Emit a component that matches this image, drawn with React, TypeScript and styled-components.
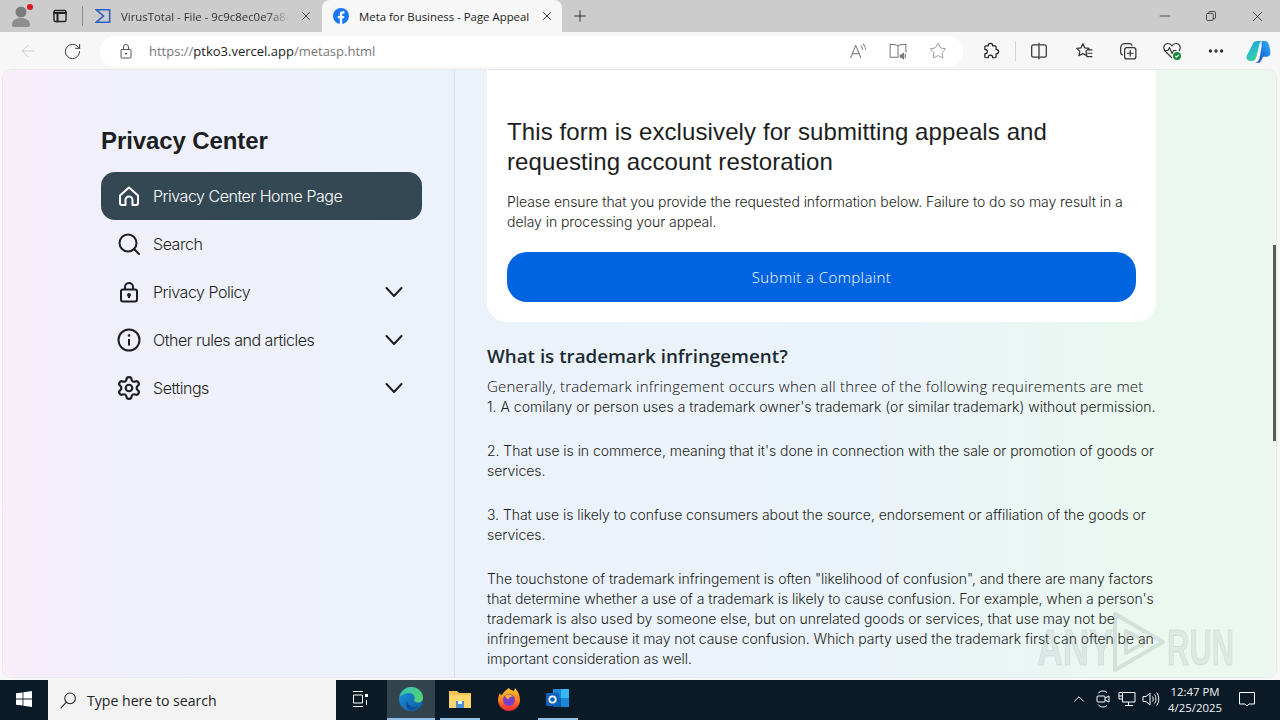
import styled, { createGlobalStyle } from "styled-components";
import { ArrowLeft, ChevronUp, Plus, RotateCw, Settings, Star, X } from "lucide-react";
import type { ReactNode } from "react";

const GlobalStyle = createGlobalStyle`
  html, body {
    margin: 0;
    padding: 0;
    width: 1280px;
    height: 720px;
    overflow: hidden;
    background: #f7f7f7;
  }
  * {
    box-sizing: border-box;
  }
`;

const CHROME_FONT = `"Open Sans", "Noto Sans", "Liberation Sans", sans-serif`;
const BODY_FONT = `Inter, "Liberation Sans", sans-serif`;

const Screen = styled.div`
  width: 1280px;
  height: 720px;
  display: flex;
  flex-direction: column;
  overflow: hidden;
  font-family: ${CHROME_FONT};
`;

/* tab strip */
const TabStrip = styled.div`
  height: 32px;
  flex: none;
  display: flex;
  align-items: center;
  background: #cccccc;
  color: #222;
`;

const StripSlot = styled.div<{ $w: number; $pr?: number }>`
  width: ${(p) => p.$w}px;
  padding-right: ${(p) => p.$pr ?? 0}px;
  height: 32px;
  flex: none;
  display: flex;
  align-items: center;
  justify-content: center;
  position: relative;
`;

const RedDot = styled.span`
  position: absolute;
  top: 4px;
  left: 27px;
  width: 6px;
  height: 6px;
  border-radius: 50%;
  background: #e0141c;
`;

const StripDivider = styled.div`
  width: 1px;
  height: 20px;
  flex: none;
  background: #8f8f8f;
`;

const Tab = styled.div<{ $active?: boolean }>`
  height: 32px;
  width: ${(p) => (p.$active ? 240 : 237)}px;
  margin-left: 1px;
  padding: 0 8px 0 11px;
  flex: none;
  display: flex;
  align-items: center;
  gap: 10px;
  font-size: 11.4px;
  border-radius: 8px 8px 0 0;
  color: ${(p) => (p.$active ? "#1a1a1a" : "#333")};
  background: ${(p) => (p.$active ? "#f7f7f7" : "transparent")};
`;

const TabTitle = styled.span<{ $fade?: boolean }>`
  flex: 1;
  white-space: nowrap;
  overflow: hidden;
  mask-image: ${(p) => (p.$fade ? "linear-gradient(90deg, #000 88%, transparent 100%)" : "none")};
`;

const WindowControls = styled.div`
  margin-left: auto;
  display: flex;
`;

const WindowButton = styled.div`
  width: 46px;
  height: 32px;
  display: flex;
  align-items: center;
  justify-content: center;
`;

/* address toolbar */
const Toolbar = styled.div`
  height: 38px;
  flex: none;
  display: flex;
  align-items: center;
  padding-left: 6px;
  background: #f7f7f7;
`;

const ToolSlot = styled.div<{ $w?: number; $ml?: number }>`
  width: ${(p) => p.$w ?? 44}px;
  margin-left: ${(p) => p.$ml ?? 0}px;
  height: 32px;
  flex: none;
  display: flex;
  align-items: center;
  justify-content: center;
  color: #333;
`;

const AddressBar = styled.div`
  width: 863px;
  height: 31px;
  margin-left: 6px;
  padding-left: 18px;
  flex: none;
  display: flex;
  align-items: center;
  background: #ffffff;
  border-radius: 16px;
`;

const Url = styled.div`
  margin-left: 15px;
  flex: 1;
  font-size: 13px;
  color: #777;
  white-space: nowrap;
  b {
    font-weight: 400;
    color: #1d1d1d;
  }
`;

const ToolDivider = styled.div`
  width: 1px;
  height: 20px;
  margin: 0 1px 0 2px;
  flex: none;
  background: #d4d4d4;
`;

/* web page */
const Page = styled.div`
  height: 607px;
  flex: none;
  margin: 0 4px 3px 3px;
  display: flex;
  position: relative;
  overflow: hidden;
  border-radius: 8px;
  box-shadow: 0 0 0 1px #e9e9e9;
  background: linear-gradient(90deg, #f9eefa 0%, #f0f0fb 9%, #ecf2fb 35%, #ebf3fa 68%, #ebf8f0 90%, #ebf8ef 100%);
  color: #1c1e21;
`;

const Sidebar = styled.aside`
  width: 452px;
  flex: none;
  padding: 56px 32px 0 98px;
  border-right: 1px solid #dde2ea;
`;

const SidebarTitle = styled.h1`
  margin: 0 0 16px;
  font: 700 24px/30px "Liberation Sans", Arial, sans-serif;
  letter-spacing: -0.1px;
  color: #1c1e21;
`;

const NavItem = styled.div<{ $active?: boolean }>`
  height: 48px;
  padding: 0 16px;
  display: flex;
  align-items: center;
  gap: 12px;
  border-radius: 14px;
  font: 300 16px/20px ${BODY_FONT};
  letter-spacing: -0.47px;
  color: ${(p) => (p.$active ? "#ffffff" : "#1c1e21")};
  background: ${(p) => (p.$active ? "#344854" : "transparent")};
`;

const NavLabel = styled.span`
  flex: 1;
`;

const Main = styled.main`
  width: 669px;
  margin-left: 32px;
  flex: none;
`;

const Card = styled.section`
  padding: 47px 20px 20px;
  background: #ffffff;
  border-radius: 0 0 20px 20px;
`;

const CardTitle = styled.h2`
  margin: 0 0 15px;
  font: 400 24px/30px "Liberation Sans", Arial, sans-serif;
  letter-spacing: 0.1px;
  color: #1c1e21;
`;

const CardText = styled.p`
  margin: 0 0 20px;
  font: 300 14px/20px ${BODY_FONT};
  letter-spacing: -0.05px;
`;

const SubmitButton = styled.button`
  width: 100%;
  height: 50px;
  display: block;
  border: 0;
  border-radius: 20px;
  background: #0064e0;
  color: #ffffff;
  font: 300 15px/20px "Open Sans", sans-serif;
  letter-spacing: 0.4px;
`;

const SectionTitle = styled.h3`
  margin: 22px 0 9px;
  font: 600 18.8px/24px "Open Sans", sans-serif;
  color: #1c2b33;
`;

const Para = styled.p`
  margin: 0 0 24px;
  white-space: nowrap;
  font: 300 14px/20px ${BODY_FONT};
  letter-spacing: -0.05px;
`;

const WideLine = styled.span`
  display: block;
  margin: -1px 0 1px;
  font: 300 15px/20px "Open Sans", sans-serif;
  letter-spacing: 0.2px;
  color: #0c0d0f;
`;

const LooseLine = styled.span`
  display: block;
  letter-spacing: 0.01px;
`;

const ScrollThumb = styled.div`
  position: absolute;
  top: 175px;
  right: 0;
  width: 3px;
  height: 196px;
  background: #595959;
`;

const Watermark = styled.div`
  position: absolute;
  left: 1034px;
  top: 541px;
  height: 62px;
  display: flex;
  align-items: flex-end;
  pointer-events: none;
`;

const WatermarkWord = styled.span<{ $w: number; $sx: number }>`
  width: ${(p) => p.$w}px;
  display: block;
  transform: scaleX(${(p) => p.$sx});
  transform-origin: left bottom;
  font: 700 50px/50px "Liberation Sans", sans-serif;
  color: rgba(120, 130, 130, 0.12);
  -webkit-text-stroke: 1px rgba(120, 130, 130, 0.16);
  white-space: nowrap;
`;

/* taskbar */
const Taskbar = styled.div`
  height: 40px;
  flex: none;
  display: flex;
  align-items: stretch;
  background: #0a1a26;
  color: #fff;
`;

const TaskSlot = styled.div<{ $w: number; $active?: boolean; $mark?: boolean; $pr?: number }>`
  width: ${(p) => p.$w}px;
  padding-right: ${(p) => p.$pr ?? 0}px;
  flex: none;
  display: flex;
  align-items: center;
  justify-content: center;
  position: relative;
  background: ${(p) => (p.$active ? "#33444f" : "transparent")};
  border-bottom: 2px solid ${(p) => (p.$mark ? "#8fc1e8" : "transparent")};
`;

const SearchBox = styled.div`
  width: 288px;
  flex: none;
  display: flex;
  align-items: center;
  gap: 10px;
  padding-left: 12px;
  background: #f3f3f3;
  color: #222;
  font-size: 14.1px;
`;

const Tray = styled.div`
  margin-left: auto;
  padding-right: 13px;
  display: flex;
  align-items: stretch;
`;

const Clock = styled.div`
  width: 64px;
  flex: none;
  display: flex;
  flex-direction: column;
  align-items: center;
  justify-content: center;
  font-size: 11.4px;
  line-height: 16px;
  color: #eef2f4;
`;

const Icon = ({ size = 16, children, sw = 1, color = "currentColor" }: { size?: number; children: ReactNode; sw?: number; color?: string }) => (
  <svg width={size} height={size} viewBox="0 0 16 16" fill="none" stroke={color} strokeWidth={sw} strokeLinecap="round" strokeLinejoin="round">
    {children}
  </svg>
);

const NavChevron = () => (
  <svg width="24" height="24" viewBox="0 0 24 24" fill="none" stroke="#1c1e21" strokeWidth="2" strokeLinecap="round" strokeLinejoin="round">
    <path d="M4.500 8l7.500 8 7.500-8" />
  </svg>
);

const Avatar = () => (
  <svg width="22" height="24" viewBox="0 0 22 24">
    <circle cx="10" cy="8" r="5.500" fill="#7d7d7d" />
    <path d="M1 21c0-5 4-7 9-7s9 2 9 7c0 1-1 2-2 2H3c-1 0-2-1-2-2z" fill="#8e8e8e" />
  </svg>
);

const VirusTotalMark = () => (
  <svg width="16" height="16" viewBox="0 0 18 18" fill="none" stroke="#2f5fc4" strokeWidth="1.800">
    <path d="M1.500 2h15v14h-15L9.500 9z" />
  </svg>
);

const FacebookMark = () => (
  <svg width="16" height="16" viewBox="0 0 16 16">
    <circle cx="8" cy="8" r="8" fill="#1877f2" />
    <path d="M11 10.200l.4-2.200H9.200V6.600c0-.7.3-1.200 1.300-1.200h1V3.500s-.9-.2-1.800-.2C7.900 3.300 6.800 4.400 6.800 6.300V8h-2v2.200h2V16h2.400v-5.800z" fill="#fff" />
  </svg>
);

const CopilotMark = () => (
  <svg width="25" height="25" viewBox="0 0 24 24">
    <defs>
      <linearGradient id="cpA" x1="0" y1="0" x2="0.600" y2="1">
        <stop offset="0" stopColor="#1d8fe0" />
        <stop offset="0.600" stopColor="#2ac3c6" />
        <stop offset="1" stopColor="#43d08e" />
      </linearGradient>
      <linearGradient id="cpB" x1="1" y1="0" x2="0" y2="1">
        <stop offset="0" stopColor="#2bb4ec" />
        <stop offset="0.600" stopColor="#1f6fe0" />
        <stop offset="1" stopColor="#2a3fc0" />
      </linearGradient>
    </defs>
    <path d="M15 2h3c2.500 0 3.500 1.500 4.300 4.500l1 5c.6 3.500-1 5.500-3.500 5.500h-3.300l-2.500 4.500C13 23 11.500 23 9 23c3-1 3.500-3 4.300-6L15 7z" fill="url(#cpB)" />
    <path d="M6 6c.8-2.700 2.500-4 5-4h5c-2 0-2.700 1.700-3.300 4L10 17c-.7 2.700-2 4-4.500 4H4c-2.500 0-4-2-3.300-5z" fill="url(#cpA)" />
  </svg>
);

const EdgeMark = () => (
  <svg width="26" height="26" viewBox="0 0 26 26">
    <defs>
      <linearGradient id="edA" x1="0" y1="0" x2="1" y2="1">
        <stop offset="0" stopColor="#35c1b0" />
        <stop offset="1" stopColor="#5ad36a" />
      </linearGradient>
      <linearGradient id="edB" x1="0" y1="0" x2="1" y2="1">
        <stop offset="0" stopColor="#1c8fd8" />
        <stop offset="1" stopColor="#0c5ea8" />
      </linearGradient>
    </defs>
    <circle cx="13" cy="13" r="12" fill="url(#edB)" />
    <path d="M1.500 11C3 5 8 1 13 1c7 0 12 5 12 10.500 0 3-2 5-5 5-2 0-4-1-4-2.500 2-2 0-7-5-7-4 0-7 2-9.500 4z" fill="url(#edA)" />
    <path d="M9 14c0 4 3 7 7 7 2 0 3-.5 4-1-2 3-5 4-7 4-4 0-6-5-4-10z" fill="#0a4f96" />
  </svg>
);

const FolderMark = () => (
  <svg width="24" height="22" viewBox="0 0 24 22">
    <path d="M1 3h8l2 2h12v15H1z" fill="#f2c14e" />
    <rect x="1" y="7" width="22" height="13" fill="#fbd76b" />
    <rect x="8" y="13" width="8" height="7" fill="#4a90d6" />
    <rect x="10" y="13" width="4" height="3" fill="#e8f0f8" />
  </svg>
);

const FirefoxMark = () => (
  <svg width="24" height="26" viewBox="0 0 24 26">
    <defs>
      <linearGradient id="ffA" x1="0" y1="0" x2="0" y2="1">
        <stop offset="0" stopColor="#ffc72b" />
        <stop offset="0.550" stopColor="#ff7a1f" />
        <stop offset="1" stopColor="#f0243c" />
      </linearGradient>
    </defs>
    <path d="M12 2c1 2 3 2 5 3l1-3c3 3 5 7 5 12 0 6-5 11-11 11S1 20 1 14c0-3 1-5 2-7 0 1 1 2 2 2 1-3 4-5 7-7z" fill="url(#ffA)" />
    <circle cx="12" cy="14" r="6" fill="#7b3fc8" />
    <path d="M8 10c2-2 6-2 8 1-2-1-4 0-4 2-2 0-3-1-4-3z" fill="#ffb02e" />
  </svg>
);

const OutlookMark = () => (
  <svg width="26" height="24" viewBox="0 0 26 24">
    <rect x="8" y="2" width="16" height="18" fill="#1a86d8" />
    <rect x="16" y="2" width="8" height="9" fill="#35b8f1" />
    <rect x="8" y="11" width="8" height="9" fill="#0f5fa8" />
    <rect x="1" y="6" width="13" height="13" rx="1" fill="#0b62c0" />
    <circle cx="7.500" cy="12.500" r="3.200" fill="none" stroke="#fff" strokeWidth="1.700" />
  </svg>
);

export default function App() {
  return (
    <Screen>
      <GlobalStyle />
      <TabStrip>
        <StripSlot $w={44}>
          <Avatar />
          <RedDot />
        </StripSlot>
        <StripSlot $w={38} $pr={6}>
          <Icon size={16} sw={1.400}>
            <rect x="2" y="2.500" width="12" height="11" rx="1.500" />
            <path d="M2 5h12M5.500 5v8.500" strokeWidth="2" />
          </Icon>
        </StripSlot>
        <StripDivider />
        <Tab>
          <VirusTotalMark />
          <TabTitle $fade>VirusTotal - File - 9c9c8ec0e7a8e7</TabTitle>
          <X size={14} strokeWidth={1.500} />
        </Tab>
        <Tab $active>
          <FacebookMark />
          <TabTitle>Meta for Business - Page Appeal</TabTitle>
          <X size={14} strokeWidth={1.500} />
        </Tab>
        <StripSlot $w={36}>
          <Plus size={18} strokeWidth={1.200} />
        </StripSlot>
        <WindowControls>
          <WindowButton>
            <Icon size={12}><path d="M1.500 8h13" /></Icon>
          </WindowButton>
          <WindowButton>
            <Icon size={12}>
              <rect x="2" y="4.500" width="9" height="9.500" rx="1.500" />
              <path d="M5 4V3.500A1.500 1.500 0 0 1 6.500 2h6A1.500 1.500 0 0 1 14 3.500V10a1.500 1.500 0 0 1-1.500 1.500H11" />
            </Icon>
          </WindowButton>
          <WindowButton>
            <X size={17} strokeWidth={1.100} />
          </WindowButton>
        </WindowControls>
      </TabStrip>

      <Toolbar>
        <ToolSlot>
          <ArrowLeft size={20} strokeWidth={1} color="#c4c4c4" />
        </ToolSlot>
        <ToolSlot>
          <RotateCw size={19} strokeWidth={1.200} />
        </ToolSlot>
        <AddressBar>
          <Icon size={16} color="#555">
            <rect x="3" y="6.500" width="10" height="8.500" rx="1" />
            <path d="M5.500 6.500V4a2.500 2.500 0 0 1 5 0v2.500" />
            <circle cx="8" cy="10.700" r=".6" fill="#555" />
          </Icon>
          <Url>https://<b>ptko3.vercel.app</b>/metasp.html</Url>
          <ToolSlot $w={40}>
            <Icon size={18} color="#777" sw={0.900}>
              <path d="M1.500 14L6 3l4.500 11M3 10.500h6" />
              <path d="M10.500 3.500c1 .8 1.500 1.800 1.500 3M12.500 1.800c1.500 1.200 2.200 2.800 2.200 4.700" />
            </Icon>
          </ToolSlot>
          <ToolSlot $w={40}>
            <Icon size={18} color="#777" sw={0.900}>
              <path d="M8 3.500C7 2.500 4 2 1 2v11.500h7M8 3.500C9 2.500 12 2 15 2v7M8 3.500v10" />
              <path d="M10 11.500h1.200l1.800-1.500v5l-1.800-1.500H10zM14.500 11v3" fill="#777" />
            </Icon>
          </ToolSlot>
          <ToolSlot $w={40}>
            <Star size={18} strokeWidth={1} color="#777" />
          </ToolSlot>
          <ToolSlot $w={5} />
        </AddressBar>
        <ToolSlot $ml={6}>
          <Icon size={18} sw={1.100} color="#222">
            <path d="M5.500 3.500c0-3 4-3 4 0h2a1 1 0 0 1 1 1v2c3 0 3 4 0 4v2.500a1 1 0 0 1-1 1H9.500c0-3-4-3-4 0h-2a1 1 0 0 1-1-1v-2.500c3 0 3-4 0-4v-2a1 1 0 0 1 1-1z" />
          </Icon>
        </ToolSlot>
        <ToolDivider />
        <ToolSlot>
          <Icon size={18} sw={1.100}>
            <path d="M7 2.500H3A1.500 1.500 0 0 0 1.500 4v8A1.500 1.500 0 0 0 3 13.500h4M9 2.500h4A1.500 1.500 0 0 1 14.500 4v8a1.500 1.500 0 0 1-1.500 1.500H9M8 1v14" />
          </Icon>
        </ToolSlot>
        <ToolSlot $ml={1}>
          <Icon size={18} sw={1.100}>
            <path d="M7 1.500l1.700 3.800 3.800.4-2.800 2.600.8 3.900L7 10.300l-3.500 1.900.8-3.900L1.500 5.700l3.800-.4zM12 7h3M11.500 10h3.500M10.500 13h4.500" />
          </Icon>
        </ToolSlot>
        <ToolSlot>
          <Icon size={18} sw={1.100}>
            <rect x="5" y="5" width="10" height="10" rx="2" />
            <path d="M10 7.500v5M7.500 10h5M3 11.500A2 2 0 0 1 1.500 9.500V5A3.500 3.500 0 0 1 5 1.500h4.500A2 2 0 0 1 11.500 3" />
          </Icon>
        </ToolSlot>
        <ToolSlot>
          <svg width="20" height="20" viewBox="0 0 20 20" fill="none" stroke="#333" strokeWidth="1.100" strokeLinejoin="round">
            <path d="M10 17L3 10C0 6 3 2 6.500 2.500 8 2.700 9.500 4 10 5c.5-1 2-2.300 3.500-2.500C17 2 20 6 17 10M2 9.500h4l1.500-3 2.500 6 1.500-3h3" />
            <circle cx="15" cy="15" r="4" fill="#1a8a3c" stroke="none" />
            <path d="M13.300 15l1.200 1.200 2.200-2.300" stroke="#fff" />
          </svg>
        </ToolSlot>
        <ToolSlot>
          <Icon size={18}>
            <circle cx="3" cy="8" r="1" fill="#222" />
            <circle cx="8" cy="8" r="1" fill="#222" />
            <circle cx="13" cy="8" r="1" fill="#222" />
          </Icon>
        </ToolSlot>
        <ToolSlot $w={40}>
          <CopilotMark />
        </ToolSlot>
      </Toolbar>

      <Page>
        <Sidebar>
          <SidebarTitle>Privacy Center</SidebarTitle>
          <NavItem $active>
            <svg width="24" height="24" viewBox="0 0 24 24" fill="none" stroke="#fff" strokeWidth="2" strokeLinejoin="round">
              <path d="M3 11.500L12 3.500l9 8V19a2 2 0 0 1-2 2h-3.500v-5a3.500 3.500 0 0 0-7 0v5H5a2 2 0 0 1-2-2z" />
            </svg>
            <NavLabel>Privacy Center Home Page</NavLabel>
          </NavItem>
          <NavItem>
            <svg width="24" height="24" viewBox="0 0 24 24" fill="none" stroke="#1c1e21" strokeWidth="2" strokeLinecap="round">
              <circle cx="11" cy="11" r="8.500" />
              <path d="M17.500 17.500L22 22" />
            </svg>
            <NavLabel>Search</NavLabel>
          </NavItem>
          <NavItem>
            <svg width="24" height="24" viewBox="0 0 24 24" fill="none" stroke="#1c1e21" strokeWidth="2">
              <rect x="4" y="9.500" width="16" height="12" rx="2" />
              <path d="M8 9.500V7a4 4 0 0 1 8 0v2.500" />
              <circle cx="12" cy="15" r="2" fill="#1c1e21" stroke="none" />
              <path d="M12 15v3" />
            </svg>
            <NavLabel>Privacy Policy</NavLabel>
            <NavChevron />
          </NavItem>
          <NavItem>
            <svg width="24" height="24" viewBox="0 0 24 24" fill="none" stroke="#1c1e21" strokeWidth="2">
              <circle cx="12" cy="12" r="10.500" />
              <path d="M12 11v6.500" />
              <circle cx="12" cy="7.500" r="1.300" fill="#1c1e21" stroke="none" />
            </svg>
            <NavLabel>Other rules and articles</NavLabel>
            <NavChevron />
          </NavItem>
          <NavItem>
            <Settings size={24} strokeWidth={2} viewBox="1 1 22 22" />
            <NavLabel>Settings</NavLabel>
            <NavChevron />
          </NavItem>
        </Sidebar>

        <Main>
          <Card>
            <CardTitle>This form is exclusively for submitting appeals and requesting account restoration</CardTitle>
            <CardText>
              Please ensure that you provide the requested information below. Failure to do so may result in a delay in processing your appeal.
            </CardText>
            <SubmitButton>Submit a Complaint</SubmitButton>
          </Card>
          <SectionTitle>What is trademark infringement?</SectionTitle>
          <Para>
            <WideLine>Generally, trademark infringement occurs when all three of the following requirements are met</WideLine>
            <LooseLine>1. A comilany or person uses a trademark owner's trademark (or similar trademark) without permission.</LooseLine>
          </Para>
          <Para>
            2. That use is in commerce, meaning that it's done in connection with the sale or promotion of goods or
            <br />
            services.
          </Para>
          <Para>
            3. That use is likely to confuse consumers about the source, endorsement or affiliation of the goods or
            <br />
            services.
          </Para>
          <Para>
            The touchstone of trademark infringement is often "likelihood of confusion", and there are many factors
            <br />
            that determine whether a use of a trademark is likely to cause confusion. For example, when a person's
            <br />
            trademark is also used by someone else, but on unrelated goods or services, that use may not be
            <br />
            infringement because it may not cause confusion. Which party used the trademark first can often be an
            <br />
            important consideration as well.
          </Para>
        </Main>
        <ScrollThumb />
        <Watermark>
          <WatermarkWord $w={74} $sx={0.72}>ANY</WatermarkWord>
          <svg width="56" height="62" viewBox="0 0 56 62" fill="none" stroke="rgba(120,130,130,0.2)" strokeWidth="4" strokeLinejoin="round">
            <path d="M4 3l48 28L4 59z" />
            <path d="M15 20l20 11-20 11z" />
          </svg>
          <WatermarkWord $w={66} $sx={0.62}>RUN</WatermarkWord>
        </Watermark>
      </Page>

      <Taskbar>
        <TaskSlot $w={48}>
          <svg width="16" height="16" viewBox="0 0 16 16" fill="#fff">
            <path d="M0 2.300L6.600 1.400V7.600H0zM7.400 1.300L16 0V7.600H7.400zM0 8.400H6.600V14.600L0 13.700zM7.400 8.400H16V16L7.400 14.700z" />
          </svg>
        </TaskSlot>
        <SearchBox>
          <Icon size={17} color="#222">
            <circle cx="9.500" cy="6" r="5" />
            <path d="M6 9.500L1 15" />
          </Icon>
          Type here to search
        </SearchBox>
        <TaskSlot $w={51} $pr={3}>
          <svg width="17" height="16" viewBox="0 0 17 16" fill="none" stroke="#fff">
            <path d="M1 .5h10M1 15.500h10M1.500 4h9v8h-9z" />
            <rect x="13" y="3" width="3" height="3" fill="#fff" stroke="none" />
            <path d="M14.500 9v5" />
          </svg>
        </TaskSlot>
        <TaskSlot $w={48} $active $mark>
          <EdgeMark />
        </TaskSlot>
        <TaskSlot $w={5} />
        <TaskSlot $w={40} $mark>
          <FolderMark />
        </TaskSlot>
        <TaskSlot $w={58}>
          <FirefoxMark />
        </TaskSlot>
        <TaskSlot $w={40} $mark>
          <OutlookMark />
        </TaskSlot>
        <Tray>
          <TaskSlot $w={24}>
            <ChevronUp size={18} strokeWidth={1.300} />
          </TaskSlot>
          <TaskSlot $w={24}>
            <svg width="16" height="18" viewBox="0 0 16 18" fill="none" stroke="#fff">
              <path d="M3 3.500C4 2 6 1 8 1s3 .8 4 1.500M3 14.500C4 16 6 17 8 17s3-.8 4-1.500" />
              <rect x="2" y="6" width="8" height="6" rx="1" />
              <path d="M10 8l4-2v6l-4-2" />
            </svg>
          </TaskSlot>
          <TaskSlot $w={24}>
            <svg width="18" height="16" viewBox="0 0 18 16" fill="none" stroke="#fff">
              <path d="M1 1.500h3M4.500 1.500H17V11H4.500zM1 1.500V8h3.500M7 14.500h8M10.500 11v3.500M1 5h3" />
            </svg>
          </TaskSlot>
          <TaskSlot $w={24}>
            <svg width="18" height="16" viewBox="0 0 18 16" fill="none" stroke="#fff">
              <path d="M1 5.500h3L8 2v12l-4-3.500H1zM10.500 5.500c1 1.500 1 3.500 0 5M12.500 3.500c2 2.500 2 6.500 0 9M14.500 1.500c3 3.500 3 9.500 0 13" />
            </svg>
          </TaskSlot>
          <Clock>
            <span>12:47 PM</span>
            <span>4/25/2025</span>
          </Clock>
          <TaskSlot $w={40}>
            <svg width="18" height="18" viewBox="0 0 18 18" fill="none" stroke="#fff">
              <path d="M1.500 2.500h15V14H11l-2 2-2-2H1.500z" />
            </svg>
          </TaskSlot>
        </Tray>
      </Taskbar>
    </Screen>
  );
}
